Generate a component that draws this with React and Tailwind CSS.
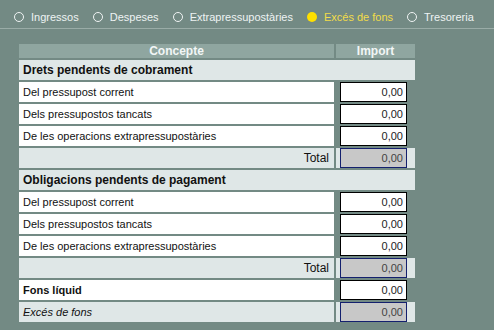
const tabs = [
  { label: 'Ingressos' },
  { label: 'Despeses' },
  { label: 'Extrapressupostàries' },
  { label: 'Excés de fons', active: true },
  { label: 'Tresoreria' },
]

const font = { fontFamily: '"Liberation Sans", Arial, sans-serif' }

function Section({ title }) {
  return (
    <div className="col-span-2 h-[20px] bg-[#dfe7e7] pl-[4px] flex items-center text-[12px] font-bold text-[#111]">
      {title}
    </div>
  )
}

function Amount({ total }) {
  return (
    <div
      className={
        total
          ? 'ml-[4px] h-[20px] w-[67px] border border-[#14206e] bg-[#c8c8c8] text-[#444] text-right pr-[3px] text-[11px] leading-[18px]'
          : 'ml-[4px] h-[20px] w-[67px] border border-black bg-white text-[#222] text-right pr-[3px] text-[11px] leading-[18px]'
      }
    >
      0,00
    </div>
  )
}

function Row({ label }) {
  return (
    <>
      <div className="h-[20px] bg-white pl-[4px] flex items-center text-[11px] text-[#111]">{label}</div>
      <div className="h-[20px]">
        <Amount />
      </div>
    </>
  )
}

function TotalRow() {
  return (
    <>
      <div className="h-[20px] bg-[#dfe7e7] pr-[5px] flex items-center justify-end text-[12px] text-[#111]">Total</div>
      <div className="h-[20px] bg-[#dfe7e7]">
        <Amount total />
      </div>
    </>
  )
}

export default function App() {
  return (
    <div className="w-[494px] h-[330px] bg-[#738a84] overflow-hidden" style={font}>
      <div className="h-[28px] pt-[6px] pl-[14px] flex items-center gap-[14px] text-[11px]">
        {tabs.map((t) => (
          <div key={t.label} className="flex items-center gap-[7px]">
            {t.active ? (
              <span className="w-[10px] h-[10px] rounded-full bg-[#ffe000]" />
            ) : (
              <span className="w-[10px] h-[10px] rounded-full border border-[#f0f4f4]" />
            )}
            <span className={t.active ? 'text-[#f2dc4a]' : 'text-[#eef3f3]'}>{t.label}</span>
          </div>
        ))}
      </div>
      <div className="h-px bg-[#9aaca7]" />
      <div className="mt-[15px] ml-[19px] grid grid-cols-[315px_79px] gap-[2px]">
        <div className="h-[14px] bg-[#8fa6a0] text-center text-[12px] leading-[14px] font-bold text-[#f2f6f6]">Concepte</div>
        <div className="h-[14px] bg-[#8fa6a0] text-center text-[12px] leading-[14px] font-bold text-[#f2f6f6]">Import</div>

        <Section title="Drets pendents de cobrament" />
        <Row label="Del pressupost corrent" />
        <Row label="Dels pressupostos tancats" />
        <Row label="De les operacions extrapressupostàries" />
        <TotalRow />

        <Section title="Obligacions pendents de pagament" />
        <Row label="Del pressupost corrent" />
        <Row label="Dels pressupostos tancats" />
        <Row label="De les operacions extrapressupostàries" />
        <TotalRow />

        <div className="h-[20px] bg-white pl-[4px] flex items-center text-[11px] font-bold text-[#111]">Fons líquid</div>
        <div className="h-[20px]">
          <Amount />
        </div>
        <div className="h-[20px] bg-[#dfe7e7] pl-[4px] flex items-center text-[11px] italic text-[#111]">Excés de fons</div>
        <div className="h-[20px] bg-[#dfe7e7]">
          <Amount total />
        </div>
      </div>
    </div>
  )
}
